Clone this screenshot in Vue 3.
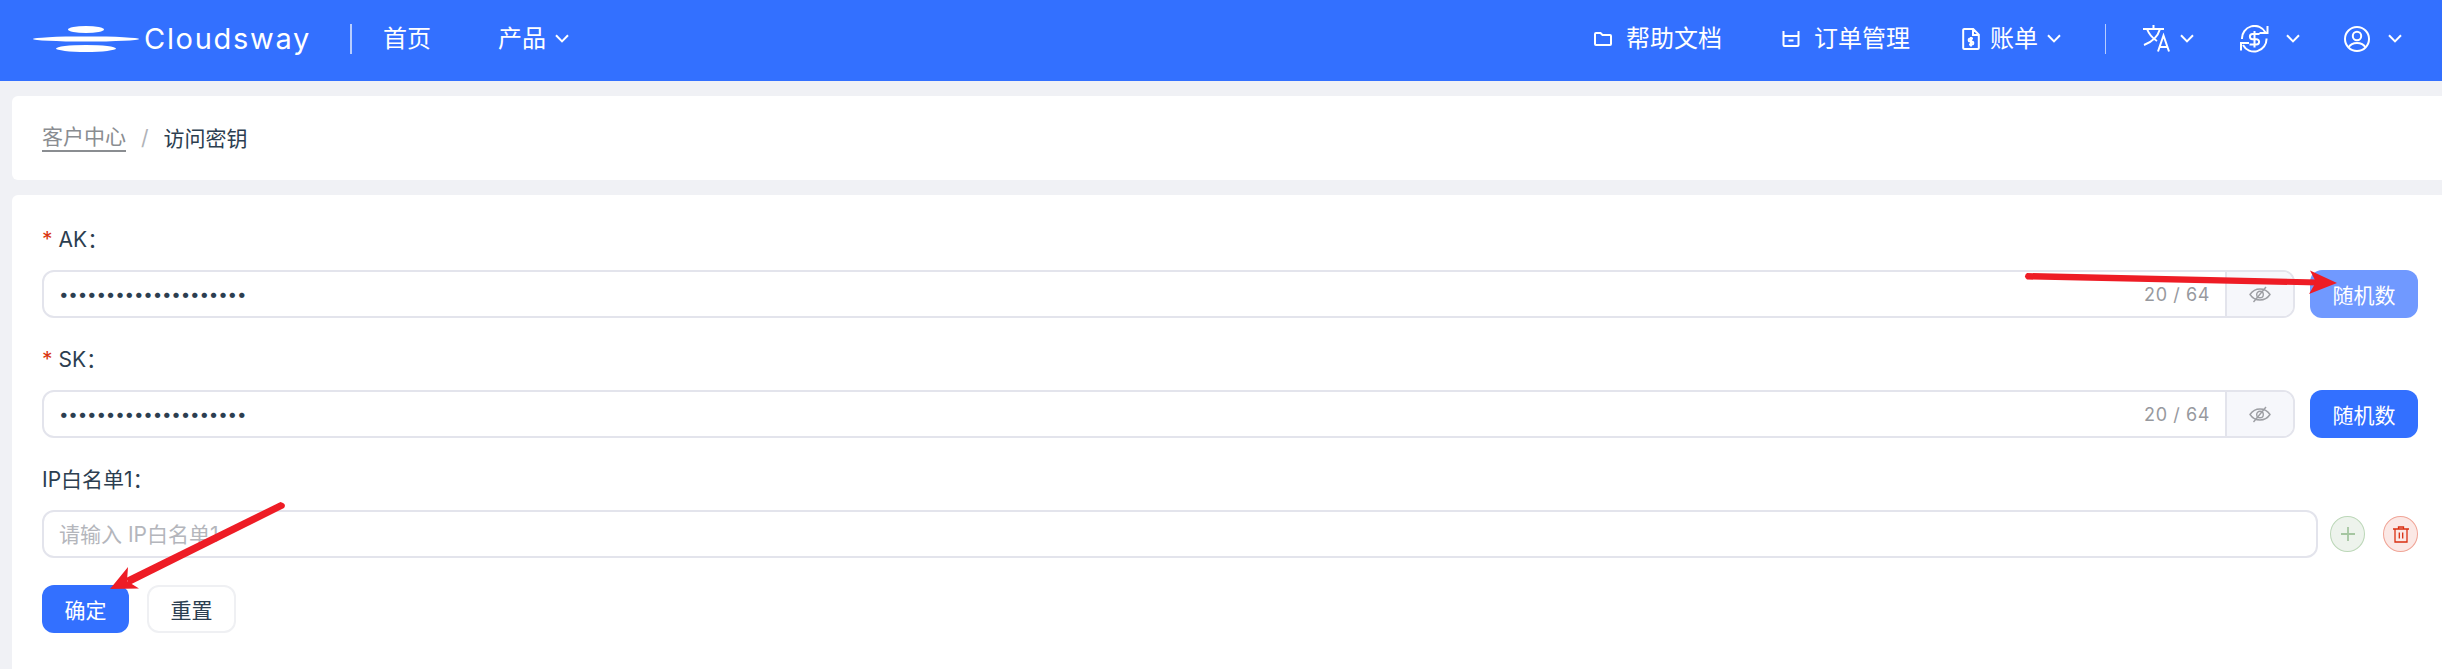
<template>
  <div class="page">
    <header class="topbar">
      <div class="nav-left">
        <svg class="logo-mark" width="106" height="26" viewBox="0 0 106 26">
          <ellipse cx="53" cy="3.5" rx="18" ry="3.5" fill="#fff" />
          <ellipse cx="53" cy="13" rx="53" ry="2.6" fill="#fff" />
          <ellipse cx="53" cy="22.5" rx="30" ry="3.5" fill="#fff" />
        </svg>
        <span class="logo-text">Cloudsway</span>
        <span class="nav-divider"></span>
        <a class="nav-link home">首页</a>
        <a class="nav-link">产品
          <svg class="chev" width="14" height="9" viewBox="0 0 14 9"><path d="M1 1.2 7 7.4 13 1.2" /></svg>
        </a>
      </div>
      <div class="nav-right">
        <a class="nav-link docs">
          <svg class="ico" width="18" height="14" viewBox="0 0 18 14"><path d="M1 2a1 1 0 0 1 1-1h4.5l2 2H16a1 1 0 0 1 1 1v8a1 1 0 0 1-1 1H2a1 1 0 0 1-1-1z" /></svg>
          帮助文档
        </a>
        <a class="nav-link orders">
          <svg class="ico" width="18" height="17" viewBox="0 0 18 17"><path d="M1.5 1v14a1 1 0 0 0 1 1h13a1 1 0 0 0 1-1V1M1.5 6h15M6.5 10.5h5" /></svg>
          订单管理
        </a>
        <a class="nav-link bills">
          <svg class="ico" width="18" height="22" viewBox="0 0 18 22"><path d="M1.2 2a1 1 0 0 1 1-1h9l5.600 5.600V20a1 1 0 0 1-1 1H2.200a1 1 0 0 1-1-1zM11 1v6h6M11 10.5H8.200a1.500 1.500 0 0 0 0 3h1.600a1.500 1.500 0 0 1 0 3H7M9 9v9.500" /></svg>
          账单
          <svg class="chev" width="14" height="9" viewBox="0 0 14 9"><path d="M1 1.2 7 7.4 13 1.2" /></svg>
        </a>
        <span class="nav-divider thin"></span>
        <a class="nav-icon lang">
          <svg class="ico" width="28" height="27" viewBox="0 0 28 27"><path d="M0 4h21M10.500 0v4M17 4c-2 7-8 13-16 16M4 4c2 5 5 9 10 12M15 26.500l5.500-16 5.500 16M16.800 22h7.500" /></svg>
          <svg class="chev" width="14" height="9" viewBox="0 0 14 9"><path d="M1 1.2 7 7.4 13 1.2" /></svg>
        </a>
        <a class="nav-icon money">
          <svg class="ico" width="29" height="28" viewBox="0 0 29 28"><path d="M2 14A12.500 12.500 0 0 1 25.500 7.500M26.500 13.500A12.500 12.500 0 0 1 3 20M19.500 8h8V1M9 18h-8v7.500M19.500 9h-7a2.600 2.600 0 0 0 0 5.200h4a2.600 2.600 0 0 1 0 5.200H9.500M14.500 6v16.500" /></svg>
          <svg class="chev" width="14" height="9" viewBox="0 0 14 9"><path d="M1 1.2 7 7.4 13 1.2" /></svg>
        </a>
        <a class="nav-icon user">
          <svg class="ico" width="26" height="26" viewBox="0 0 26 26"><circle cx="13" cy="13" r="12" /><circle cx="13" cy="10" r="4.200" /><path d="M4.500 21.500c2-3.500 5-4.500 8.500-4.500s6.500 1 8.500 4.500" /></svg>
          <svg class="chev" width="14" height="9" viewBox="0 0 14 9"><path d="M1 1.2 7 7.4 13 1.2" /></svg>
        </a>
      </div>
    </header>

    <main class="content">
      <div class="card crumbs">
        <a class="crumb-link">客户中心</a>
        <span class="crumb-sep">/</span>
        <span class="crumb-now">访问密钥</span>
      </div>

      <form class="card form" @submit.prevent>
        <div v-for="f in keyFields" :key="f.name" class="field">
          <label class="field-label"><span class="star">*</span>{{ f.name }}：</label>
          <div class="field-row">
            <div class="input-group">
              <div class="input-box">
                <input class="secret" type="password" :value="f.value" />
                <span class="count">{{ f.value.length }} / 64</span>
              </div>
              <div class="addon">
                <svg width="22" height="17" viewBox="0 0 22 17" fill="none" stroke="#9d9fa4" stroke-width="1.400"><path d="M1 8.500C3.500 4.800 7 3 11 3s7.500 1.800 10 5.500C18.500 12.200 15 14 11 14S3.500 12.200 1 8.500Z" /><circle cx="11" cy="8.500" r="3.300" /><path d="M17 1 4.500 16" /></svg>
              </div>
            </div>
            <button type="button" class="btn primary random" :class="{ hovered: f.hovered }">随机数</button>
          </div>
        </div>

        <div class="field ip-field">
          <label class="field-label">IP白名单1：</label>
          <div class="field-row tight">
            <div class="input-box solo">
              <input type="text" placeholder="请输入 IP白名单1" />
            </div>
            <span class="circle add">
              <svg width="16" height="16" viewBox="0 0 16 16"><path d="M8 1v14M1 8h14" stroke="#a5c6a1" stroke-width="1.800" /></svg>
            </span>
            <span class="circle del">
              <svg width="16" height="17" viewBox="0 0 16 17" fill="none" stroke="#d92e10" stroke-width="1.300"><path d="M0 3h16M5.500 3V1h5v2M2 3v13h12V3M6.300 6.500v6M9.700 6.500v6" /></svg>
            </span>
          </div>
        </div>

        <div class="actions">
          <button type="button" class="btn primary submit">确定</button>
          <button type="button" class="btn plain">重置</button>
        </div>
      </form>
    </main>

    <!-- annotation arrows drawn on top of the screenshot -->
    <svg class="marks" width="2442" height="669" viewBox="0 0 2442 669">
      <path d="M2027 273 2318 279.500 2318 285.500 2027 279.500Q2023 276 2027 273Z" fill="#ee1c25" />
      <path d="M2310 270.500 2337 283 2309 294 2316 282Z" fill="#ee1c25" />
      <path d="M280.500 502 126 578 129.500 585 284 508Q287 504 280.500 502Z" fill="#ee1c25" />
      <path d="M128 567 110 589 139 588.500 127 581Z" fill="#ee1c25" />
    </svg>
  </div>
</template>

<script setup>
const keyFields = [
  { name: 'AK', value: 'a8f3k2m9q1x7c4v6b0zd', hovered: true },
  { name: 'SK', value: 'p5t2w8r1y6u3i9o4e7nh', hovered: false }
]
</script>

<style>
body {
  background: #f0f1f5;
}
</style>

<style scoped>
.page {
  position: relative;
  height: 669px;
  overflow: hidden;
  font-family: Inter, "Noto Sans CJK SC", sans-serif;
  color: #2c3e50;
  background: #f0f1f5;
}

.topbar {
  height: 81px;
  background: #3370ff;
  color: #fff;
  display: flex;
  align-items: center;
  justify-content: space-between;
  padding: 0 40px 4px 33px;
  box-sizing: border-box;
}

.nav-left,
.nav-right {
  display: flex;
  align-items: center;
}

.logo-mark {
  margin-right: 5px;
}

.logo-text {
  font-size: 29px;
  font-weight: 400;
  letter-spacing: 1.7px;
  line-height: 36px;
  width: 165px;
}

.nav-divider {
  width: 2px;
  height: 30px;
  background: rgba(255, 255, 255, 0.65);
  margin: 0 31px 0 41px;
}

.nav-divider.thin {
  width: 1px;
  margin: 0 37px 0 44px;
}

.nav-link,
.nav-icon {
  display: flex;
  align-items: center;
  font-size: 24px;
  line-height: 34px;
  white-space: nowrap;
}

.home {
  margin-right: 67px;
}

.docs {
  margin-right: 60px;
}

.orders {
  margin-right: 52px;
}

.lang {
  margin-right: 46px;
}

.money {
  margin-right: 44px;
}

.ico {
  fill: none;
  stroke: #fff;
  stroke-width: 2;
  margin-right: 14px;
  flex: none;
}

.bills .ico {
  margin-right: 10px;
}

.nav-icon .ico {
  margin-right: 9px;
}

.money.nav-icon .ico {
  margin-right: 17px;
}

.user.nav-icon .ico {
  margin-right: 18px;
}

.chev {
  fill: none;
  stroke: #fff;
  stroke-width: 2;
  margin-left: 9px;
}

.nav-icon .chev {
  margin-left: 0;
}

.content {
  padding: 15px 0 0 12px;
}

.card {
  background: #fff;
  border-radius: 6px 0 0 6px;
}

.crumbs {
  height: 84px;
  margin-bottom: 15px;
  padding: 0 30px 2px;
  box-sizing: border-box;
  display: flex;
  align-items: center;
  font-size: 21px;
}

.crumb-link {
  color: #8a8d91;
  border-bottom: 2px solid #8a8d91;
  line-height: 27px;
}

.crumb-sep {
  color: #b1b3b8;
  margin: 0 15px;
}

.form {
  height: 480px;
  padding: 27px 24px 0 30px;
  box-sizing: border-box;
}

.field {
  margin-bottom: 24px;
}

.ip-field {
  margin-bottom: 27px;
}

.field-label {
  display: block;
  height: 33px;
  line-height: 36px;
  margin-bottom: 15px;
  font-size: 21px;
}

.star {
  color: #d9340f;
  margin-right: 6px;
}

.field-row {
  display: flex;
  gap: 15px;
}

.field-row.tight {
  gap: 12px;
  align-items: center;
}

.input-group {
  flex: 1;
  display: flex;
  height: 48px;
  box-sizing: border-box;
  border: 2px solid #e3e4ec;
  border-radius: 12px;
  overflow: hidden;
}

.input-box {
  flex: 1;
  display: flex;
  align-items: center;
  padding: 0 15px 0 15px;
}

.input-box.solo {
  height: 48px;
  box-sizing: border-box;
  border: 2px solid #e3e4ec;
  border-radius: 12px;
}

.input-box input {
  flex: 1;
  min-width: 0;
  border: 0;
  outline: 0;
  padding: 0;
  background: transparent;
  font-family: inherit;
  font-size: 21px;
  color: #2c3e50;
}

.input-box input.secret {
  font-size: 17px;
  letter-spacing: -0.2px;
}

.input-box input::placeholder {
  color: #b4b6bc;
}

.count {
  font-size: 18px;
  color: #97999e;
  letter-spacing: 0.6px;
  white-space: pre;
}

.addon {
  width: 66px;
  display: flex;
  align-items: center;
  justify-content: center;
  background: #f6f7fb;
  border-left: 2px solid #e3e4ec;
}

.btn {
  height: 48px;
  border: 0;
  border-radius: 12px;
  font-family: inherit;
  font-size: 21px;
  cursor: pointer;
}

.btn.primary {
  background: #3370ff;
  color: #fff;
}

.btn.hovered {
  background: #7099ff;
}

.random {
  width: 108px;
}

.circle {
  width: 35px;
  height: 36px;
  flex: none;
  box-sizing: border-box;
  border-radius: 50%;
  display: flex;
  align-items: center;
  justify-content: center;
}

.circle.add {
  background: #edf3ec;
  border: 1.500px solid #bcd7b8;
}

.circle.del {
  background: #fbe8e5;
  border: 1.500px solid #f0a496;
  margin-left: 6px;
}

.actions {
  display: flex;
  gap: 18px;
}

.submit {
  width: 87px;
}

.btn.plain {
  width: 89px;
  background: #fff;
  border: 2px solid #eff0f3;
  color: #2c3e50;
}

.marks {
  position: absolute;
  left: 0;
  top: 0;
  pointer-events: none;
}
</style>
